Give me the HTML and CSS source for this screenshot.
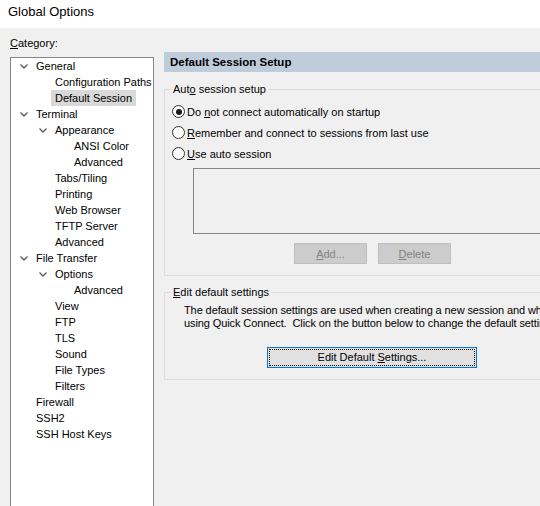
FILE: index.html
```html
<!DOCTYPE html>
<html lang="en">
<head>
  <meta charset="UTF-8">
  <title>Global Options</title>
  <link rel="stylesheet" href="styles.css">
</head>
<body>
  <div class="titlebar">Global Options</div>

  <div class="main">
    <div class="sidebar">
      <div class="cat-label"><u>C</u>ategory:</div>
      <ul class="tree">
        <li class="l0"><span class="tw"><svg width="8" height="5" viewBox="0 0 8 5"><path d="M0.5 0.5 L4 4 L7.5 0.5" /></svg></span><span class="txt">General</span></li>
        <li class="l1"><span class="tw"></span><span class="txt">Configuration Paths</span></li>
        <li class="l1"><span class="tw"></span><span class="txt sel">Default Session</span></li>
        <li class="l0"><span class="tw"><svg width="8" height="5" viewBox="0 0 8 5"><path d="M0.5 0.5 L4 4 L7.5 0.5" /></svg></span><span class="txt">Terminal</span></li>
        <li class="l1"><span class="tw"><svg width="8" height="5" viewBox="0 0 8 5"><path d="M0.5 0.5 L4 4 L7.5 0.5" /></svg></span><span class="txt">Appearance</span></li>
        <li class="l2"><span class="tw"></span><span class="txt">ANSI Color</span></li>
        <li class="l2"><span class="tw"></span><span class="txt">Advanced</span></li>
        <li class="l1"><span class="tw"></span><span class="txt">Tabs/Tiling</span></li>
        <li class="l1"><span class="tw"></span><span class="txt">Printing</span></li>
        <li class="l1"><span class="tw"></span><span class="txt">Web Browser</span></li>
        <li class="l1"><span class="tw"></span><span class="txt">TFTP Server</span></li>
        <li class="l1"><span class="tw"></span><span class="txt">Advanced</span></li>
        <li class="l0"><span class="tw"><svg width="8" height="5" viewBox="0 0 8 5"><path d="M0.5 0.5 L4 4 L7.5 0.5" /></svg></span><span class="txt">File Transfer</span></li>
        <li class="l1"><span class="tw"><svg width="8" height="5" viewBox="0 0 8 5"><path d="M0.5 0.5 L4 4 L7.5 0.5" /></svg></span><span class="txt">Options</span></li>
        <li class="l2"><span class="tw"></span><span class="txt">Advanced</span></li>
        <li class="l1"><span class="tw"></span><span class="txt">View</span></li>
        <li class="l1"><span class="tw"></span><span class="txt">FTP</span></li>
        <li class="l1"><span class="tw"></span><span class="txt">TLS</span></li>
        <li class="l1"><span class="tw"></span><span class="txt">Sound</span></li>
        <li class="l1"><span class="tw"></span><span class="txt">File Types</span></li>
        <li class="l1"><span class="tw"></span><span class="txt">Filters</span></li>
        <li class="l0"><span class="tw"></span><span class="txt">Firewall</span></li>
        <li class="l0"><span class="tw"></span><span class="txt">SSH2</span></li>
        <li class="l0"><span class="tw"></span><span class="txt">SSH Host Keys</span></li>
      </ul>
    </div>

    <div class="content">
      <div class="page-head">Default Session Setup</div>

      <fieldset class="group auto">
        <legend>Aut<u>o</u> session setup</legend>
        <div class="radio checked"><span class="circle"></span><span>Do <u>n</u>ot connect automatically on startup</span></div>
        <div class="radio"><span class="circle"></span><span><u>R</u>emember and connect to sessions from last use</span></div>
        <div class="radio"><span class="circle"></span><span><u>U</u>se auto session</span></div>
        <div class="listbox"></div>
        <div class="btn-row">
          <button class="btn" disabled><u>A</u>dd...</button>
          <button class="btn" disabled><u>D</u>elete</button>
        </div>
      </fieldset>

      <fieldset class="group edit">
        <legend><u>E</u>dit default settings</legend>
        <p class="desc">The default session settings are used when creating a new session and when<br>using Quick Connect.&nbsp; Click on the button below to change the default settings.</p>
        <button class="btn primary"><span class="focus">Edit Default <u>S</u>ettings...</span></button>
      </fieldset>
    </div>
  </div>
</body>
</html>
```

FILE: styles.css
```css
html, body { margin: 0; padding: 0; }
body { background: #f0f0f0; font-family: "Liberation Sans", Arial, sans-serif; font-size: 11px; color: #000; overflow: hidden; width: 540px; height: 506px; }
u { text-decoration: underline; text-underline-offset: 1px; }

.titlebar { height: 28px; background: #fff; padding-left: 8px; font-size: 13px; line-height: 24px; }

.main { display: flex; gap: 10px; padding: 8px 0 0 10px; }
.sidebar { width: 144px; flex: none; }
.cat-label { line-height: 14px; margin-bottom: 7px; }
.tree { list-style: none; margin: 0; padding: 0; height: 460px; background: #fff; border: 1px solid #828790; }
.tree li { display: flex; align-items: center; height: 16px; white-space: nowrap; }
.tree li.l0 { padding-left: 5px; }
.tree li.l1 { padding-left: 24px; }
.tree li.l2 { padding-left: 43px; }
.tw { width: 16px; height: 16px; flex: none; display: flex; align-items: center; padding-left: 4px; box-sizing: border-box; }
.tw svg { display: block; }
.tw path { fill: none; stroke: #5a5a5a; stroke-width: 1.3; }
.txt { padding: 0 4px; line-height: 16px; }
.txt.sel { background: #d9d9d9; }

.content { width: 420px; flex: none; margin-top: 16px; }
.page-head { height: 20px; line-height: 20px; background: #bfcddb; padding-left: 6px; font-weight: bold; font-size: 11.5px; }

.group { margin: 0; border: 1px solid #dcdcdc; border-right: none; min-width: 0; }
.group legend { padding: 0 2px; margin-left: -1px; line-height: 14px; }
.group.auto { margin-top: 10px; padding: 5px 0 11px 7px; }
.group.edit { margin-top: 9px; padding: 5px 0 11px 7px; }

.radio { display: flex; align-items: center; height: 21px; white-space: nowrap; }
.circle { width: 13px; height: 13px; box-sizing: border-box; border: 1px solid #333; border-radius: 50%; background: #fff; margin-right: 2px; display: flex; align-items: center; justify-content: center; flex: none; }
.radio.checked .circle::after { content: ""; width: 6px; height: 6px; border-radius: 50%; background: #1a1a1a; }

.listbox { margin: 4px 0 0 21px; height: 64px; border: 1px solid #828790; background: #f0f0f0; }
.btn-row { display: flex; gap: 11px; margin: 9px 0 0 122px; }
.btn { font: inherit; height: 21px; width: 73px; padding: 0; border: 1px solid #bfbfbf; background: #cccccc; color: #838383; }

.desc { margin: 0 0 0 12px; line-height: 13px; white-space: nowrap; letter-spacing: -0.1px; }
.btn.primary { margin: 17px 0 0 95px; width: 210px; border-color: #0078d7; background: #e1e1e1; color: #000; padding: 1px; display: block; }
.focus { display: block; height: 100%; line-height: 15px; text-align: center; border: 1px dotted #000; box-sizing: border-box; }
```
